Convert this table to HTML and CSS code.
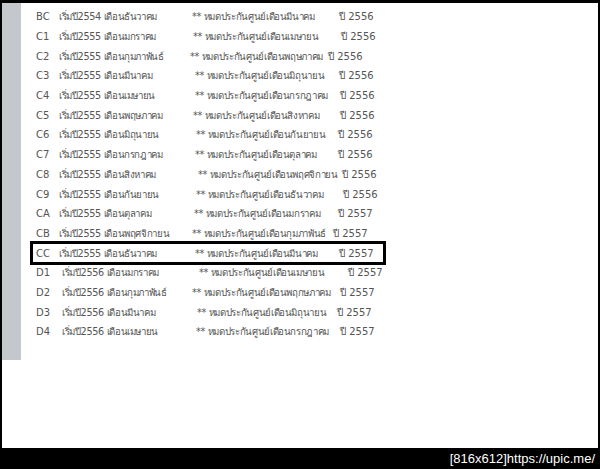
FILE: index.html
```html
<!DOCTYPE html>
<html lang="th">
  <head>
    <meta charset="UTF-8" />
    <title>ตารางหมดประกันศูนย์</title>
    <link rel="stylesheet" href="styles.css">
  </head>
  <body>
    <div class="frame">
      <div class="page">
        <div class="sidebar"></div>
        <div class="list">
          <div class="row"><span class="code">BC</span><span class="start" style="min-width:133px">เริ่มปี2554 เดือนธันวาคม</span><span class="end" style="min-width:144px">** หมดประกันศูนย์เดือนมีนาคม</span><span class="year">ปี 2556</span></div>
          <div class="row"><span class="code">C1</span><span class="start" style="min-width:134px">เริ่มปี2555 เดือนมกราคม</span><span class="end" style="min-width:145px">** หมดประกันศูนย์เดือนเมษายน</span><span class="year">ปี 2556</span></div>
          <div class="row"><span class="code">C2</span><span class="start" style="min-width:131px">เริ่มปี2555 เดือนกุมภาพันธ์</span><span class="end" style="min-width:135px">** หมดประกันศูนย์เดือนพฤษภาคม</span><span class="year">ปี 2556</span></div>
          <div class="row"><span class="code">C3</span><span class="start" style="min-width:136px">เริ่มปี2555 เดือนมีนาคม</span><span class="end" style="min-width:141px">** หมดประกันศูนย์เดือนมิถุนายน</span><span class="year">ปี 2556</span></div>
          <div class="row"><span class="code">C4</span><span class="start" style="min-width:136px">เริ่มปี2555 เดือนเมษายน</span><span class="end" style="min-width:142px">** หมดประกันศูนย์เดือนกรกฎาคม</span><span class="year">ปี 2556</span></div>
          <div class="row"><span class="code">C5</span><span class="start" style="min-width:134px">เริ่มปี2555 เดือนพฤษภาคม</span><span class="end" style="min-width:144px">** หมดประกันศูนย์เดือนสิงหาคม</span><span class="year">ปี 2556</span></div>
          <div class="row"><span class="code">C6</span><span class="start" style="min-width:137px">เริ่มปี2555 เดือนมิถุนายน</span><span class="end" style="min-width:139px">** หมดประกันศูนย์เดือนกันยายน</span><span class="year">ปี 2556</span></div>
          <div class="row"><span class="code">C7</span><span class="start" style="min-width:136px">เริ่มปี2555 เดือนกรกฎาคม</span><span class="end" style="min-width:140px">** หมดประกันศูนย์เดือนตุลาคม</span><span class="year">ปี 2556</span></div>
          <div class="row"><span class="code">C8</span><span class="start" style="min-width:139px">เริ่มปี2555 เดือนสิงหาคม</span><span class="end" style="min-width:141px">** หมดประกันศูนย์เดือนพฤศจิกายน</span><span class="year">ปี 2556</span></div>
          <div class="row"><span class="code">C9</span><span class="start" style="min-width:137px">เริ่มปี2555 เดือนกันยายน</span><span class="end" style="min-width:144px">** หมดประกันศูนย์เดือนธันวาคม</span><span class="year">ปี 2556</span></div>
          <div class="row"><span class="code">CA</span><span class="start" style="min-width:135px">เริ่มปี2555 เดือนตุลาคม</span><span class="end" style="min-width:141px">** หมดประกันศูนย์เดือนมกราคม</span><span class="year">ปี 2557</span></div>
          <div class="row"><span class="code">CB</span><span class="start" style="min-width:133px">เริ่มปี2555 เดือนพฤศจิกายน</span><span class="end" style="min-width:138px">** หมดประกันศูนย์เดือนกุมภาพันธ์</span><span class="year">ปี 2557</span></div>
          <div class="row current"><span class="code">CC</span><span class="start" style="min-width:136px">เริ่มปี2555 เดือนธันวาคม</span><span class="end" style="min-width:141px">** หมดประกันศูนย์เดือนมีนาคม</span><span class="year">ปี 2557</span></div>
          <div class="row late"><span class="code">D1</span><span class="start" style="min-width:137px">เริ่มปี2556 เดือนมกราคม</span><span class="end" style="min-width:146px">** หมดประกันศูนย์เดือนเมษายน</span><span class="year">ปี 2557</span></div>
          <div class="row late"><span class="code">D2</span><span class="start" style="min-width:130px">เริ่มปี2556 เดือนกุมภาพันธ์</span><span class="end" style="min-width:145px">** หมดประกันศูนย์เดือนพฤกษภาคม</span><span class="year">ปี 2557</span></div>
          <div class="row late"><span class="code">D3</span><span class="start" style="min-width:135px">เริ่มปี2556 เดือนมีนาคม</span><span class="end" style="min-width:137px">** หมดประกันศูนย์เดือนมิถุนายน</span><span class="year">ปี 2557</span></div>
          <div class="row late"><span class="code">D4</span><span class="start" style="min-width:134px">เริ่มปี2556 เดือนเมษายน</span><span class="end" style="min-width:141px">** หมดประกันศูนย์เดือนกรกฎาคม</span><span class="year">ปี 2557</span></div>
        </div>
      </div>
      <div class="stamp">[816x612]https://upic.me/</div>
    </div>
  </body>
</html>
```

FILE: styles.css
```css
body {
  margin: 0;
  background: #000;
  font-family: Tahoma, "DejaVu Sans", sans-serif;
}
.frame {
  width: 600px;
  height: 469px;
  padding: 3px 2px 0 2px;
  box-sizing: border-box;
  display: flex;
  flex-direction: column;
}
.page {
  background: #fff;
  height: 445px;
  display: flex;
  align-items: flex-start;
}
.sidebar {
  width: 19px;
  height: 357px;
  background: #c4c8cc;
}
.list {
  padding: 4px 0 0 15px;
  font-size: 10px;
  color: #555;
}
.row {
  display: flex;
  align-items: center;
  height: 19.7px;
  white-space: nowrap;
}
.code {
  width: 23px;
  flex-shrink: 0;
}
.late .code {
  width: 26px;
}
.start,
.end {
  flex-shrink: 0;
  font-size: 9.7px;
  letter-spacing: -0.35px;
}
.end {
  margin-right: 3px;
}
.current {
  outline: 3px solid #000;
  outline-offset: -1px;
  margin-left: -4px;
  padding-left: 4px;
  width: 348px;
}
.stamp {
  flex: 1;
  color: #fff;
  font-family: "Liberation Sans", sans-serif;
  font-size: 13px;
  text-align: right;
  padding: 3px 3px 0 0;
}
```
